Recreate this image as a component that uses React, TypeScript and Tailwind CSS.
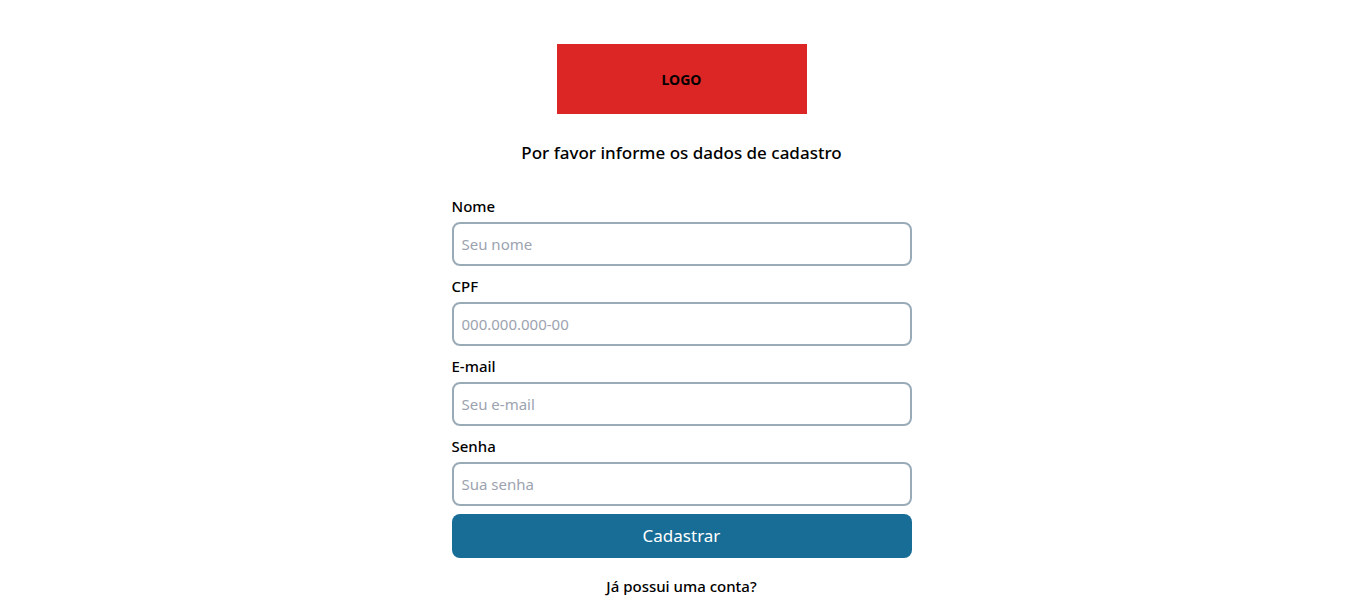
import React from "react";

const fields = [
  { label: "Nome", placeholder: "Seu nome", type: "text" },
  { label: "CPF", placeholder: "000.000.000-00", type: "text" },
  { label: "E-mail", placeholder: "Seu e-mail", type: "email" },
  { label: "Senha", placeholder: "Sua senha", type: "password" },
];

export default function App() {
  return (
    <div
      className="min-h-screen bg-white flex flex-col items-center pt-[44px] pr-[2px] text-black"
      style={{ fontFamily: '"Noto Sans", "Open Sans", sans-serif' }}
    >
      <div className="w-[250px] h-[70px] bg-[#dc2626] flex items-center justify-center">
        <span className="text-[14px] font-bold">LOGO</span>
      </div>
      <h1 className="mt-[27px] text-[17px] font-medium leading-[24px]">
        Por favor informe os dados de cadastro
      </h1>
      <form className="mt-[30px] w-[460px] flex flex-col gap-[9px]">
        {fields.map((f) => (
          <div key={f.label} className="flex flex-col gap-[5px]">
            <label className="text-[15px] font-medium leading-[22px]">{f.label}</label>
            <input
              type={f.type}
              placeholder={f.placeholder}
              className="h-[44px] w-full rounded-[8px] border-2 border-[#9aabb8] px-[8px] text-[15px] placeholder:text-[#9ca3af] outline-none"
            />
          </div>
        ))}
        <button
          type="button"
          className="-mt-[1px] h-[44px] w-full rounded-[8px] bg-[#176d96] text-white text-[17px]"
        >
          Cadastrar
        </button>
      </form>
      <p className="mt-[17px] text-[15px] font-medium leading-[22px]">Já possui uma conta?</p>
    </div>
  );
}
